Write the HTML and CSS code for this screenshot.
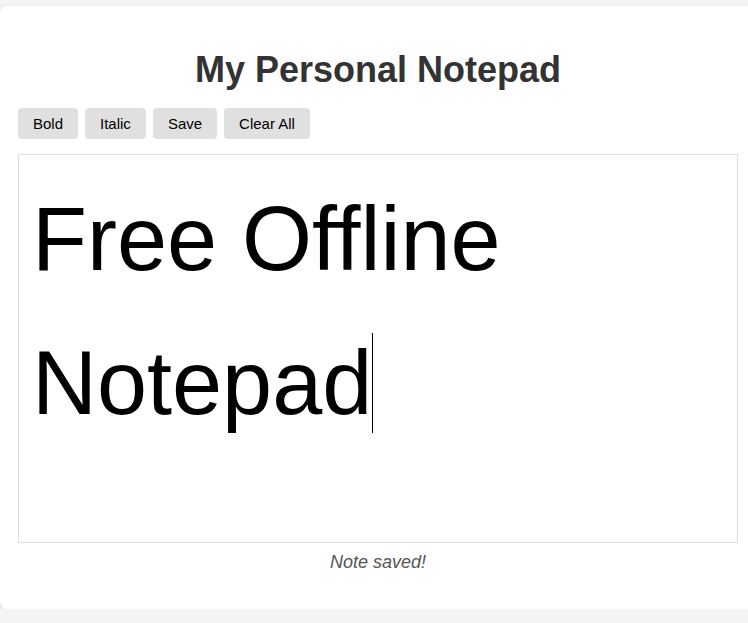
FILE: index.html
```html
<!DOCTYPE html>
<html>
<head>
<meta charset="utf-8">
<title>My Personal Notepad</title>
<link rel="stylesheet" href="styles.css">
</head>
<body>
<div class="card">
  <h1 class="title">My Personal Notepad</h1>
  <div class="toolbar">
    <button class="btn">Bold</button>
    <button class="btn">Italic</button>
    <button class="btn">Save</button>
    <button class="btn">Clear All</button>
  </div>
  <div class="editor">Free Offline Notepad<span class="caret"></span></div>
  <p class="status">Note saved!</p>
</div>
</body>
</html>
```
FILE: styles.css
```css
html, body {
  margin: 0;
  padding: 0;
  overflow: hidden;
}
body {
  background: #f4f4f4;
  font-family: "Liberation Sans", Arial, sans-serif;
}
.card {
  box-sizing: border-box;
  width: 756px;
  margin-top: 6px;
  padding: 18px 18px 36px;
  background: #fff;
  border-radius: 8px;
  box-shadow: 0 2px 6px rgba(0, 0, 0, 0.1);
}
.title {
  margin: 25px 0 17px;
  font-size: 36px;
  font-weight: bold;
  color: #333;
  text-align: center;
}
.toolbar {
  display: flex;
  gap: 7px;
  margin-bottom: 15px;
}
.btn {
  font-family: "Liberation Sans", Arial, sans-serif;
  font-size: 15px;
  line-height: 17px;
  padding: 7px 15px;
  border: none;
  border-radius: 4px;
  background: #e0e0e0;
  color: #000;
}
.editor {
  box-sizing: border-box;
  height: 389px;
  padding: 12px 13px 14px;
  border: 1px solid #ddd;
  font-size: 90px;
  line-height: 1.6;
  color: #000;
}
.caret {
  display: inline-block;
  width: 1px;
  height: 100px;
  background: #000;
  vertical-align: -19px;
}
.status {
  margin: 9px 0 0;
  font-size: 18px;
  font-style: italic;
  color: #555;
  text-align: center;
}
```
